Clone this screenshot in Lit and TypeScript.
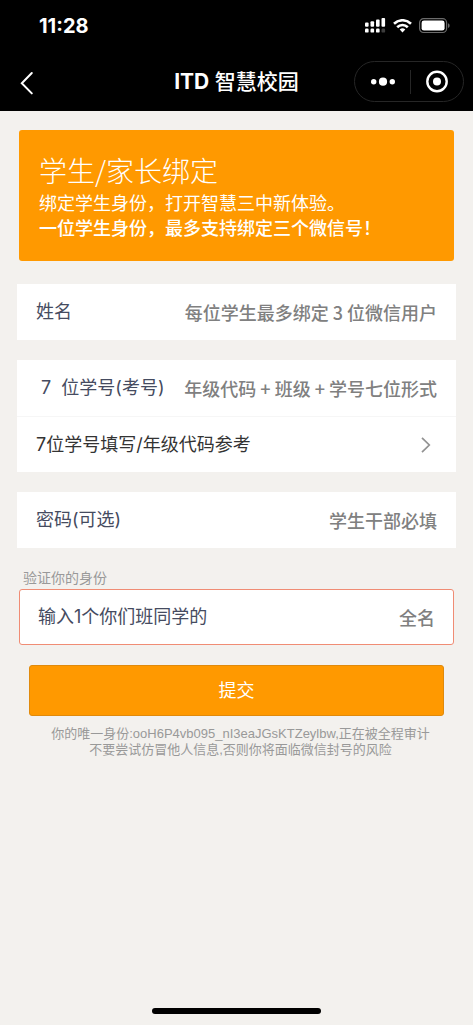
import { LitElement, html, css } from "lit";
import { customElement } from "lit/decorators.js";

@customElement("status-bar")
class StatusBar extends LitElement {
  static styles = css`
    :host {
      display: flex;
      align-items: center;
      justify-content: space-between;
      height: 52px;
      padding: 0 22px 0 39px;
      color: #fff;
    }
    .time {
      font: 700 20px/24px Inter, "Liberation Sans", sans-serif;
    }
    .icons {
      display: flex;
      align-items: center;
      gap: 7px;
    }
    svg {
      display: block;
    }
  `;

  render() {
    return html`
      <span class="time">11:28</span>
      <div class="icons">
        <svg width="21" height="16" viewBox="0 0 21 16" fill="#fff" aria-hidden="true">
          <rect x="0" y="4.4" width="3.6" height="4.4" rx="1" />
          <rect x="5.5" y="3.2" width="3.6" height="5.6" rx="1" />
          <rect x="11" y="1.6" width="3.6" height="7.2" rx="1" />
          <rect x="16.5" y="0" width="3.6" height="8.8" rx="1" />
          <rect x="0" y="10.6" width="3.6" height="4" rx="1.2" />
          <rect x="5.5" y="10.6" width="3.6" height="4" rx="1.2" />
          <rect x="11" y="10.6" width="3.6" height="4" rx="1.2" />
          <rect x="16.5" y="10.6" width="3.6" height="4" rx="1.2" fill="#3c3c3c" />
        </svg>
        <svg width="19" height="14" viewBox="0 0 19 14" aria-hidden="true">
          <g fill="none" stroke="#fff" stroke-width="2.6">
            <path d="M1 4.7a12.2 12.2 0 0 1 17 0" />
            <path d="M4.2 8.2a7.6 7.6 0 0 1 10.6 0" />
          </g>
          <path d="M6.7 10.6a4.1 4.1 0 0 1 5.6 0L9.5 13.6z" fill="#fff" />
        </svg>
        <svg width="32" height="16" viewBox="0 0 32 16" aria-hidden="true">
          <rect x="0.6" y="0.7" width="27" height="13.8" rx="4" fill="none" stroke="#6b6b6b" stroke-width="1.2" />
          <rect x="2.6" y="2.6" width="23" height="10" rx="2.4" fill="#fff" />
          <path d="M29 5.3c2.2.8 2.2 3.8 0 4.6z" fill="#6b6b6b" />
        </svg>
      </div>
    `;
  }
}

@customElement("nav-bar")
class NavBar extends LitElement {
  static styles = css`
    :host {
      display: grid;
      grid-template-columns: 1fr auto 1fr;
      align-items: center;
      height: 59px;
      padding: 0 9px 0 17px;
      color: #fff;
    }
    button {
      display: flex;
      align-items: center;
      justify-content: center;
      padding: 0;
      border: 0;
      background: none;
      color: inherit;
      cursor: pointer;
    }
    .back {
      width: 20px;
      height: 40px;
      justify-self: start;
    }
    .title {
      margin: 0 0 0 -8px;
      font: 500 21px/32px Inter, "Noto Sans CJK SC", sans-serif;
      text-align: center;
      white-space: nowrap;
    }
    .brand {
      font-weight: 700;
    }
    .capsule {
      display: flex;
      align-items: center;
      justify-self: end;
      box-sizing: border-box;
      width: 110px;
      height: 41px;
      padding-left: 2px;
      border: 1px solid #262626;
      border-radius: 21px;
    }
    .capsule button {
      flex: 1;
      height: 100%;
    }
    .rule {
      width: 1px;
      height: 24px;
      background: #262626;
    }
  `;

  render() {
    return html`
      <button class="back" aria-label="返回">
        <svg width="20" height="26" viewBox="0 0 20 26" fill="none" stroke="#fff" stroke-width="2" stroke-linecap="round" aria-hidden="true">
          <path d="M14.8 4 4.8 14.2 14.8 24.4" />
        </svg>
      </button>
      <h1 class="title"><span class="brand">ITD</span> 智慧校园</h1>
      <div class="capsule">
        <button aria-label="更多">
          <svg width="26" height="10" viewBox="0 0 26 10" fill="#fff" aria-hidden="true">
            <circle cx="3.7" cy="4.7" r="2.7" />
            <circle cx="13" cy="4.7" r="4.1" />
            <circle cx="22.3" cy="4.7" r="2.7" />
          </svg>
        </button>
        <span class="rule"></span>
        <button aria-label="关闭">
          <svg width="24" height="24" viewBox="0 0 24 24" aria-hidden="true">
            <circle cx="12" cy="11.5" r="9.7" fill="none" stroke="#fff" stroke-width="2.4" />
            <circle cx="12" cy="11.5" r="4" fill="#fff" />
          </svg>
        </button>
      </div>
    `;
  }
}

@customElement("app-root")
class AppRoot extends LitElement {
  static styles = css`
    :host {
      display: flex;
      flex-direction: column;
      box-sizing: border-box;
      min-height: 100vh;
      background: #f3f1ee;
      font: 400 18px/26px Inter, "Noto Sans CJK SC", sans-serif;
      color: #333;
    }
    .top {
      background: #000;
    }
    .page {
      flex: 1;
      padding: 19px 17px 0;
    }
    .hero {
      margin: 0 2px 23px;
      padding: 21px 20px;
      border-radius: 3px;
      background: #ff9900;
      color: #fff;
      font-family: "Noto Sans CJK SC", sans-serif;
    }
    .hero h2 {
      margin: 0;
      font-size: 28px;
      font-weight: 300;
      line-height: 39px;
    }
    .hero p {
      margin: 0;
      font-weight: 400;
      line-height: 25px;
    }
    .hero .strong {
      font-weight: 500;
    }
    .card {
      margin-bottom: 20px;
      background: #fff;
    }
    .row {
      display: flex;
      align-items: center;
      box-sizing: border-box;
      height: 56px;
      padding: 0 19px;
      color: #333;
      text-decoration: none;
    }
    .row + .row {
      border-top: 1px solid #f6f6f6;
    }
    .row label {
      flex: none;
      color: #454b60;
      white-space: pre;
    }
    .row input {
      flex: 1;
      min-width: 0;
      height: 28px;
      padding: 0;
      border: 0;
      outline: 0;
      background: none;
      font: 500 18px/28px "Noto Sans CJK SC", sans-serif;
      color: #333;
      text-align: right;
    }
    .row input::placeholder {
      color: #808080;
      opacity: 1;
    }
    .row svg {
      margin: 0 5px 0 auto;
    }
    .caption {
      margin: 0 6px 2px;
      color: #999;
      font-size: 14px;
      line-height: 19px;
    }
    .framed {
      margin: 0 2px 20px;
      padding: 0 18px;
      border: 1px solid #f08c74;
      border-radius: 3px;
      background: #fff;
    }
    .submit {
      display: block;
      box-sizing: border-box;
      width: calc(100% - 24px);
      height: 51px;
      margin: 0 12px 10px;
      border: 1px solid #e08a0c;
      border-radius: 3px;
      background: #ff9900;
      color: #fff;
      font: inherit;
      cursor: pointer;
    }
    .note {
      margin: 0 0 0 8px;
      color: #999;
      font: 400 13px/16px "Liberation Sans", "Noto Sans CJK SC", sans-serif;
      text-align: center;
    }
    .home {
      align-self: center;
      width: 169px;
      height: 6px;
      margin-bottom: 11px;
      border-radius: 3px;
      background: #000;
    }
  `;

  private submit(event: Event) {
    event.preventDefault();
  }

  render() {
    return html`
      <header class="top">
        <status-bar></status-bar>
        <nav-bar></nav-bar>
      </header>
      <main class="page">
        <section class="hero">
          <h2>学生/家长绑定</h2>
          <p>绑定学生身份，打开智慧三中新体验。</p>
          <p class="strong">一位学生身份，最多支持绑定三个微信号！</p>
        </section>
        <form @submit=${this.submit}>
          <div class="card">
            <div class="row">
              <label for="name">姓名</label>
              <input id="name" type="text" placeholder="每位学生最多绑定 3 位微信用户" />
            </div>
          </div>
          <div class="card">
            <div class="row">
              <label for="number"> 7  位学号(考号)</label>
              <input id="number" type="text" placeholder="年级代码 + 班级 + 学号七位形式" />
            </div>
            <a class="row" href="#reference">
              7位学号填写/年级代码参考
              <svg width="12" height="18" viewBox="0 0 12 18" fill="none" stroke="#929292" stroke-width="1.7" aria-hidden="true">
                <path d="M2 1.8 9.3 9 2 16.2" />
              </svg>
            </a>
          </div>
          <div class="card">
            <div class="row">
              <label for="password">密码(可选)</label>
              <input id="password" type="password" placeholder="学生干部必填" />
            </div>
          </div>
          <p class="caption">验证你的身份</p>
          <div class="row framed">
            <label for="classmate">输入1个你们班同学的</label>
            <input id="classmate" type="text" placeholder="全名" />
          </div>
          <button class="submit" type="submit">提交</button>
        </form>
        <p class="note">
          你的唯一身份:ooH6P4vb095_nI3eaJGsKTZeylbw,正在被全程审计<br />不要尝试仿冒他人信息,否则你将面临微信封号的风险
        </p>
      </main>
      <div class="home"></div>
    `;
  }
}
